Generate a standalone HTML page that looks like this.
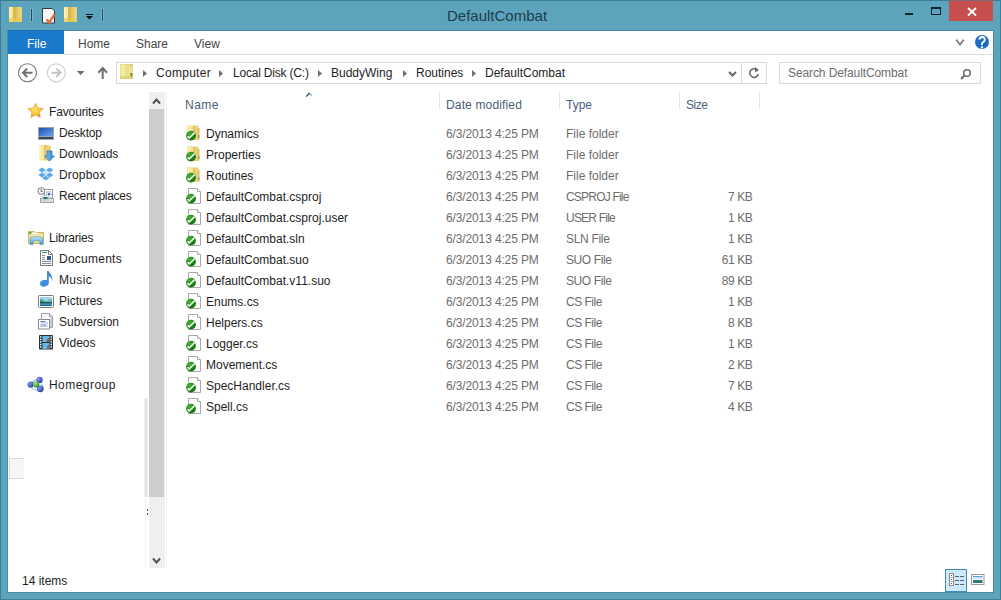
<!DOCTYPE html>
<html><head><meta charset="utf-8">
<style>
*{margin:0;padding:0;box-sizing:border-box}
html,body{width:1001px;height:600px;overflow:hidden;background:#5ba4bb;font-family:"Liberation Sans",sans-serif;font-size:12px;color:#1e1e1e}
.a{position:absolute}
.t{position:absolute;white-space:nowrap;line-height:12px}
.gy{color:#6d6d6d}
.ic{position:absolute;width:16px;height:16px}
.folder{background:linear-gradient(90deg,#f3dd8a,#e9c85a)}
.file{background:#fff;border:1px solid #aaa}

</style></head><body>
<div class="a" style="left:0;top:0;width:1001px;height:600px;border:1px solid #3d7f98"></div>
<div class="t" style="left:447px;top:8px;font-size:15px;line-height:15px;color:#1e3c50">DefaultCombat</div>
<div class="a" style="left:7px;top:30px;width:987px;height:563px;background:#fff;border:1px solid #4d8a9e"></div>
<div class="a" style="left:8px;top:30px;width:56px;height:24px;background:#1979ca;border-top:1px solid #1f6cb0"></div>
<div class="t" style="left:27px;top:38px;color:#fff">File</div>
<div class="t" style="left:78px;top:38px;color:#444">Home</div>
<div class="t" style="left:136px;top:38px;color:#444">Share</div>
<div class="t" style="left:194px;top:38px;color:#444">View</div>
<div class="a" style="left:64px;top:54px;width:929px;height:1px;background:#dadbdc"></div>
<div class="a" style="left:116px;top:62px;width:651px;height:22px;border:1px solid #d9d9d9"></div>
<div class="a" style="left:741px;top:62px;width:1px;height:22px;background:#d9d9d9"></div>
<div class="a" style="left:779px;top:62px;width:202px;height:22px;border:1px solid #d9d9d9"></div>
<div class="t" style="left:156px;top:67px;letter-spacing:0.28px">Computer</div>
<div class="t" style="left:233px;top:67px;letter-spacing:-0.2px">Local Disk (C:)</div>
<div class="t" style="left:331px;top:67px">BuddyWing</div>
<div class="t" style="left:416px;top:67px">Routines</div>
<div class="t" style="left:485px;top:67px">DefaultCombat</div>
<div class="t gy" style="left:788px;top:67px;letter-spacing:-0.1px">Search DefaultCombat</div>
<div class="t" style="left:49px;top:106px;letter-spacing:-0.13px">Favourites</div>
<div class="t" style="left:59px;top:127px;letter-spacing:-0.17px">Desktop</div>
<div class="t" style="left:59px;top:148px">Downloads</div>
<div class="t" style="left:59px;top:169px;letter-spacing:0.17px">Dropbox</div>
<div class="t" style="left:59px;top:190px;letter-spacing:-0.28px">Recent places</div>
<div class="t" style="left:49px;top:232px;letter-spacing:-0.18px">Libraries</div>
<div class="t" style="left:59px;top:253px;letter-spacing:0.25px">Documents</div>
<div class="t" style="left:59px;top:274px;letter-spacing:0.35px">Music</div>
<div class="t" style="left:59px;top:295px">Pictures</div>
<div class="t" style="left:59px;top:316px">Subversion</div>
<div class="t" style="left:59px;top:337px">Videos</div>
<div class="t" style="left:49px;top:379px;letter-spacing:0.45px">Homegroup</div>
<div class="a" style="left:144px;top:398px;width:4px;height:99px;background:#e6e6e6;border-left:1px solid #efefef;border-right:1px solid #f0f0f0"></div>
<div class="a" style="left:9px;top:458px;width:15px;height:21px;background:#f6f6f6;border:1px solid #dadada;border-right:none"></div>
<div class="a" style="left:147px;top:509px;width:1px;height:2px;background:#1f5a9a"></div><div class="a" style="left:147px;top:513px;width:1px;height:2px;background:#1f5a9a"></div><div class="a" style="left:145px;top:497px;width:1px;height:71px;background:#f2f2f2"></div>
<div class="a" style="left:149px;top:92px;width:16px;height:476px;background:#efefef"></div><div class="a" style="left:166px;top:92px;width:1px;height:476px;background:#f0f0f0"></div>
<div class="a" style="left:149px;top:109px;width:15px;height:388px;background:#cdcdcd"></div>
<div class="t" style="left:185px;top:99px;color:#4c607a;letter-spacing:0.5px">Name</div>
<div class="t" style="left:446px;top:99px;color:#4c607a;letter-spacing:0.15px">Date modified</div>
<div class="t" style="left:566px;top:99px;color:#4c607a">Type</div>
<div class="t" style="left:686px;top:99px;color:#4c607a;letter-spacing:-0.5px">Size</div>
<div class="a" style="left:439px;top:92px;width:1px;height:17px;background:#e5e5e5"></div>
<div class="a" style="left:559px;top:92px;width:1px;height:17px;background:#e5e5e5"></div>
<div class="a" style="left:679px;top:92px;width:1px;height:17px;background:#e5e5e5"></div>
<div class="a" style="left:759px;top:92px;width:1px;height:17px;background:#e5e5e5"></div>
<div class="t" style="left:22px;top:575px">14 items</div>
<div class="a" style="left:945px;top:569px;width:22px;height:23px;background:#cde9f9;border:1px solid #3b8bbb"></div>

<div class="t nm" style="left:206px;top:128px">Dynamics</div>
<div class="t gy dt" style="left:446px;top:128px;letter-spacing:-0.13px">6/3/2013 4:25 PM</div>
<div class="t gy ty" style="left:566px;top:128px;letter-spacing:0px">File folder</div>
<div class="t nm" style="left:206px;top:149px">Properties</div>
<div class="t gy dt" style="left:446px;top:149px;letter-spacing:-0.13px">6/3/2013 4:25 PM</div>
<div class="t gy ty" style="left:566px;top:149px;letter-spacing:0px">File folder</div>
<div class="t nm" style="left:206px;top:170px">Routines</div>
<div class="t gy dt" style="left:446px;top:170px;letter-spacing:-0.13px">6/3/2013 4:25 PM</div>
<div class="t gy ty" style="left:566px;top:170px;letter-spacing:0px">File folder</div>
<div class="t nm" style="left:206px;top:191px">DefaultCombat.csproj</div>
<div class="t gy dt" style="left:446px;top:191px;letter-spacing:-0.13px">6/3/2013 4:25 PM</div>
<div class="t gy ty" style="left:566px;top:191px;letter-spacing:-0.8px">CSPROJ File</div>
<div class="t gy sz" style="right:248.6px;top:191px;letter-spacing:-0.4px">7 KB</div>
<div class="t nm" style="left:206px;top:212px">DefaultCombat.csproj.user</div>
<div class="t gy dt" style="left:446px;top:212px;letter-spacing:-0.13px">6/3/2013 4:25 PM</div>
<div class="t gy ty" style="left:566px;top:212px;letter-spacing:-0.79px">USER File</div>
<div class="t gy sz" style="right:248.6px;top:212px;letter-spacing:-0.4px">1 KB</div>
<div class="t nm" style="left:206px;top:233px">DefaultCombat.sln</div>
<div class="t gy dt" style="left:446px;top:233px;letter-spacing:-0.13px">6/3/2013 4:25 PM</div>
<div class="t gy ty" style="left:566px;top:233px;letter-spacing:-0.3px">SLN File</div>
<div class="t gy sz" style="right:248.6px;top:233px;letter-spacing:-0.4px">1 KB</div>
<div class="t nm" style="left:206px;top:254px">DefaultCombat.suo</div>
<div class="t gy dt" style="left:446px;top:254px;letter-spacing:-0.13px">6/3/2013 4:25 PM</div>
<div class="t gy ty" style="left:566px;top:254px;letter-spacing:-0.4px">SUO File</div>
<div class="t gy sz" style="right:248.6px;top:254px;letter-spacing:-0.4px">61 KB</div>
<div class="t nm" style="left:206px;top:275px">DefaultCombat.v11.suo</div>
<div class="t gy dt" style="left:446px;top:275px;letter-spacing:-0.13px">6/3/2013 4:25 PM</div>
<div class="t gy ty" style="left:566px;top:275px;letter-spacing:-0.4px">SUO File</div>
<div class="t gy sz" style="right:248.6px;top:275px;letter-spacing:-0.4px">89 KB</div>
<div class="t nm" style="left:206px;top:296px">Enums.cs</div>
<div class="t gy dt" style="left:446px;top:296px;letter-spacing:-0.13px">6/3/2013 4:25 PM</div>
<div class="t gy ty" style="left:566px;top:296px;letter-spacing:-0.5px">CS File</div>
<div class="t gy sz" style="right:248.6px;top:296px;letter-spacing:-0.4px">1 KB</div>
<div class="t nm" style="left:206px;top:317px">Helpers.cs</div>
<div class="t gy dt" style="left:446px;top:317px;letter-spacing:-0.13px">6/3/2013 4:25 PM</div>
<div class="t gy ty" style="left:566px;top:317px;letter-spacing:-0.5px">CS File</div>
<div class="t gy sz" style="right:248.6px;top:317px;letter-spacing:-0.4px">8 KB</div>
<div class="t nm" style="left:206px;top:338px">Logger.cs</div>
<div class="t gy dt" style="left:446px;top:338px;letter-spacing:-0.13px">6/3/2013 4:25 PM</div>
<div class="t gy ty" style="left:566px;top:338px;letter-spacing:-0.5px">CS File</div>
<div class="t gy sz" style="right:248.6px;top:338px;letter-spacing:-0.4px">1 KB</div>
<div class="t nm" style="left:206px;top:359px">Movement.cs</div>
<div class="t gy dt" style="left:446px;top:359px;letter-spacing:-0.13px">6/3/2013 4:25 PM</div>
<div class="t gy ty" style="left:566px;top:359px;letter-spacing:-0.5px">CS File</div>
<div class="t gy sz" style="right:248.6px;top:359px;letter-spacing:-0.4px">2 KB</div>
<div class="t nm" style="left:206px;top:380px">SpecHandler.cs</div>
<div class="t gy dt" style="left:446px;top:380px;letter-spacing:-0.13px">6/3/2013 4:25 PM</div>
<div class="t gy ty" style="left:566px;top:380px;letter-spacing:-0.5px">CS File</div>
<div class="t gy sz" style="right:248.6px;top:380px;letter-spacing:-0.4px">7 KB</div>
<div class="t nm" style="left:206px;top:401px">Spell.cs</div>
<div class="t gy dt" style="left:446px;top:401px;letter-spacing:-0.13px">6/3/2013 4:25 PM</div>
<div class="t gy ty" style="left:566px;top:401px;letter-spacing:-0.5px">CS File</div>
<div class="t gy sz" style="right:248.6px;top:401px;letter-spacing:-0.4px">4 KB</div>
<svg class="a" style="left:0;top:0" width="1001" height="600" viewBox="0 0 1001 600">
<defs>
 <linearGradient id="fy" x1="0" x2="1"><stop offset="0" stop-color="#fdf3c0"/><stop offset="1" stop-color="#f3de8a"/></linearGradient>
 <linearGradient id="fy2" x1="0" x2="1"><stop offset="0" stop-color="#e2c060"/><stop offset="1" stop-color="#f0d888"/></linearGradient>
 <radialGradient id="gc" cx="0.35" cy="0.3" r="0.75"><stop offset="0" stop-color="#4db03a"/><stop offset="0.6" stop-color="#208a18"/><stop offset="1" stop-color="#156a10"/></radialGradient>
 <g id="fold">
  <rect x="2" y="0.5" width="11.5" height="14.5" fill="#e9d27a"/>
  <rect x="2.5" y="1" width="5.5" height="13.5" fill="url(#fy)"/>
  <rect x="8" y="1" width="4.5" height="13.5" fill="url(#fy2)"/>
  <rect x="12.5" y="3" width="2" height="11.5" fill="#e0c058"/>
  <rect x="13" y="10" width="1.5" height="3" fill="#8fa6a0"/>
 </g>
 <g id="chk">
  <circle cx="6" cy="10.6" r="4.9" fill="url(#gc)"/>
  <path d="M2.6 11.3 L4.2 13 L9.6 7.6" fill="none" stroke="#f4fff0" stroke-width="1.5"/>
 </g>
 <g id="page">
  <path d="M3.5 0.5 H12.5 L15.5 3.5 V15.5 H3.5 Z" fill="#fff" stroke="#a8a8a8"/>
  <path d="M12.5 0.5 V3.5 H15.5" fill="#fff" stroke="#a8a8a8"/>
 </g>
 <g id="tfold">
  <rect x="0" y="0" width="7" height="16" fill="url(#fy)"/>
  <rect x="6" y="0" width="5" height="16" fill="url(#fy2)"/>
  <rect x="11" y="1" width="2.5" height="14" fill="#e3c35a"/>
 </g>
</defs>
<!-- title bar icons -->
<g id="tf1">
<rect x="9" y="7" width="13" height="15" fill="#e8cc60"/>
<rect x="9" y="7" width="4.5" height="15" fill="url(#fy)"/>
<rect x="13" y="7" width="3" height="15" fill="#d8b848"/>
<rect x="16" y="7" width="5.5" height="15" fill="url(#fy2)"/>
<rect x="9" y="18" width="12.5" height="4" fill="#e6c850" opacity="0.6"/>
</g>
<rect x="30" y="8.5" width="3" height="13" fill="#8cc4d6" opacity="0.5"/><rect x="31" y="9" width="1" height="12" fill="#1f4a60"/>
<path d="M42.5 8.5 H52 L54.5 11 V23 H42.5 Z" fill="#fdf8f8" stroke="#303840"/>
<path d="M46.5 19.5 L49.3 22.3 L54.5 14.5" fill="none" stroke="#e66e3c" stroke-width="2.4"/>
<use href="#tf1" x="55" y="0"/>
<rect x="86" y="14" width="7" height="1" fill="#111"/>
<path d="M86 16 H93 L89.5 19.5 Z" fill="#111"/>
<rect x="101" y="8.5" width="3" height="13" fill="#8cc4d6" opacity="0.5"/><rect x="102" y="9" width="1" height="12" fill="#1f4a60"/>
<!-- window buttons -->
<rect x="905" y="13" width="8" height="2" fill="#10202a"/>
<rect x="931.5" y="7.5" width="9" height="7" fill="none" stroke="#10202a"/>
<rect x="931" y="7" width="10" height="2" fill="#10202a"/>
<rect x="949" y="0.5" width="44" height="20.5" fill="#c74f4e"/>
<path d="M968 8 L976 15.5 M976 8 L968 15.5" stroke="#fff" stroke-width="1.8"/>
<!-- ribbon right -->
<path d="M956.2 39.6 L960 44.6 L963.8 39.6" fill="none" stroke="#8c8c8c" stroke-width="2"/>
<circle cx="982" cy="42" r="7" fill="#1a6fc4"/>
<path d="M979.3 39.6 Q979.8 37 982.3 37 Q985 37.2 984.8 39.8 Q984.6 41.3 982.8 42.4 Q982 43 982 44 V45" fill="none" stroke="#fff" stroke-width="1.9"/><rect x="981" y="46.3" width="2" height="2" fill="#fff"/>
<!-- nav buttons -->
<circle cx="27.5" cy="72.8" r="9" fill="none" stroke="#787878" stroke-width="1.1"/>
<path d="M23.5 72.8 H32.5 M27.2 68.6 L23 72.8 L27.2 77" fill="none" stroke="#6e6e6e" stroke-width="2"/>
<circle cx="56.3" cy="72.8" r="9" fill="none" stroke="#d0d0d0" stroke-width="1.2"/>
<path d="M51.5 72.8 H60.5 M56.3 68.6 L60.5 72.8 L56.3 77" fill="none" stroke="#c4c4c4" stroke-width="2"/>
<path d="M76.8 71 H84.6 L80.7 75 Z" fill="#6e6e6e"/>
<path d="M102.7 68.5 V79 M98.3 72.8 L102.7 68 L107.1 72.8" fill="none" stroke="#707070" stroke-width="2"/>
<g>
<rect x="120" y="64" width="13" height="15" fill="#dcd070"/>
<rect x="120.5" y="64.5" width="5" height="14" fill="#f2eca8"/>
<rect x="125.5" y="64.5" width="4.5" height="14" fill="#ecdf88"/>
<rect x="130" y="66" width="2.6" height="12" fill="#e8e4a0"/>
<rect x="130.5" y="73" width="1.8" height="4" fill="#7a8040"/>
<rect x="120" y="76" width="13" height="3" fill="#d8c860" opacity="0.5"/>
</g>
<path d="M143 70 L147 73.5 L143 77 Z" fill="#707070"/>
<path d="M219 70 L223 73.5 L219 77 Z" fill="#707070"/>
<path d="M318 70 L322 73.5 L318 77 Z" fill="#707070"/>
<path d="M403 70 L407 73.5 L403 77 Z" fill="#707070"/>
<path d="M472 70 L476 73.5 L472 77 Z" fill="#707070"/>
<path d="M729 72 L732.5 75.5 L736 72" fill="none" stroke="#6a6a6a" stroke-width="2"/>
<path d="M757.3 70.2 A4.3 4.3 0 1 0 758.3 74" fill="none" stroke="#6a6a6a" stroke-width="1.6"/>
<path d="M755 67 L759 70 L755 72.5 Z" fill="#6a6a6a"/>
<circle cx="967" cy="73" r="3.3" fill="none" stroke="#6a6a6a" stroke-width="1.5"/>
<path d="M964.7 75.3 L961 79" stroke="#6a6a6a" stroke-width="2"/>
<!-- scroll arrows -->
<path d="M153 103.5 L156.5 99.5 L160 103.5" fill="none" stroke="#505050" stroke-width="2"/>
<path d="M153 558.5 L156.5 562.5 L160 558.5" fill="none" stroke="#505050" stroke-width="2"/>
<!-- sort arrow -->
<path d="M309.5 93 L312 95.8" fill="none" stroke="#8ab8c8" stroke-width="1.2"/><path d="M306.2 96.6 L309.6 93" fill="none" stroke="#2a4858" stroke-width="1.3"/>

<!-- star -->
<defs>
<radialGradient id="star" cx="0.45" cy="0.45" r="0.6"><stop offset="0" stop-color="#fde66a"/><stop offset="0.6" stop-color="#f5c030"/><stop offset="1" stop-color="#e07a28"/></radialGradient>
<linearGradient id="scr" x1="0" y1="0" x2="1" y2="1"><stop offset="0" stop-color="#1f4fb0"/><stop offset="1" stop-color="#6aa4f0"/></linearGradient>
<linearGradient id="arr" x1="0" x2="1"><stop offset="0" stop-color="#7cc4f4"/><stop offset="1" stop-color="#2a80d0"/></linearGradient>
<linearGradient id="lib" x1="0" y1="0" x2="0" y2="1"><stop offset="0" stop-color="#bfe8fb"/><stop offset="1" stop-color="#3a9ad8"/></linearGradient>
<linearGradient id="pic" x1="0" y1="0" x2="0" y2="1"><stop offset="0" stop-color="#9fd6f0"/><stop offset="0.45" stop-color="#a8dde8"/><stop offset="0.6" stop-color="#2d6e5a"/><stop offset="0.75" stop-color="#5aa8c8"/><stop offset="1" stop-color="#2a6aa8"/></linearGradient>
<radialGradient id="bb" cx="0.35" cy="0.35" r="0.7"><stop offset="0" stop-color="#8aa0f0"/><stop offset="1" stop-color="#2a3a9a"/></radialGradient>
<radialGradient id="gb" cx="0.35" cy="0.35" r="0.7"><stop offset="0" stop-color="#9ef07a"/><stop offset="1" stop-color="#1a8a2a"/></radialGradient>
</defs>
<path d="M35.6 103.2 L37.9 107.9 L43.3 108.6 L39.4 112.2 L40.4 117.4 L35.6 114.9 L30.8 117.4 L31.8 112.2 L27.9 108.6 L33.3 107.9 Z" fill="url(#star)" stroke="#e39a40" stroke-width="0.6"/>
<!-- desktop -->
<rect x="38" y="127" width="16" height="13" fill="#9aa4ae"/>
<rect x="39" y="128" width="14" height="8" fill="url(#scr)"/>
<rect x="39" y="137" width="14" height="2" fill="#38465a"/>
<!-- downloads -->
<rect x="39" y="145" width="6" height="15.5" fill="url(#fy)"/>
<rect x="44" y="145" width="5" height="15.5" fill="url(#fy2)"/>
<rect x="49" y="146" width="1.6" height="14" fill="#e3c35a"/>
<path d="M47 151 H52 V156 H54.3 L49.5 161.2 L44.7 156 H47 Z" fill="url(#arr)" stroke="#2a70b8" stroke-width="0.7"/>
<!-- dropbox -->
<g fill="#5aa8e8">
<path d="M42 167.5 L38.3 170 L42 172.5 L45.8 170 Z"/>
<path d="M49.7 167.5 L45.8 170 L49.7 172.5 L53.4 170 Z"/>
<path d="M38.3 175 L42 172.5 L45.8 175 L42 177.5 Z" />
<path d="M53.4 175 L49.7 172.5 L45.8 175 L49.7 177.5 Z"/>
<path d="M42 178 L45.8 175.8 L49.7 178 L45.8 180.5 Z"/>
</g>
<path d="M42 172.5 L45.8 170 L49.7 172.5 L45.8 175 Z" fill="#c8e4fa"/>
<!-- recent places -->
<rect x="44.5" y="189.5" width="8" height="8.5" fill="#fff" stroke="#9a9a9a"/>
<rect x="46" y="191.5" width="5" height="1" fill="#9ab0d0"/><rect x="46" y="193.5" width="1.5" height="1.5" fill="#8aa8d8"/><rect x="48" y="193.2" width="2" height="2" fill="#2a5aa0"/><rect x="50.5" y="193.5" width="1" height="1.5" fill="#5a8ad0"/>
<circle cx="41.3" cy="191" r="3.2" fill="#fafafa" stroke="#8a8a8a" stroke-width="1.1"/>
<path d="M41.2 189.2 V191.5 H42.5" fill="none" stroke="#333" stroke-width="0.8"/>
<path d="M40.5 198.5 H53.5 V202.5 H40.5 Z" fill="#e0e0e0" stroke="#a0a0a0"/>
<rect x="42.3" y="195.8" width="6.4" height="4.4" fill="#d8eef6" stroke="#9ccbe0" stroke-width="0.6"/>
<rect x="43.3" y="197" width="4.4" height="2.2" fill="#3e7468"/>
<!-- libraries -->
<path d="M28.5 231.5 H34 L35 232.5 H43.5 V243.5 H28.5 Z" fill="#f2dc90" stroke="#d4b060" stroke-width="1"/>
<rect x="29" y="232" width="2.5" height="1.8" fill="#5aaa3a"/>
<rect x="32" y="232.6" width="6" height="1.2" fill="#fff"/>
<rect x="29" y="234.5" width="14" height="1" fill="#e8f0c8"/>
<path d="M30 244.5 V240 Q30 236.8 33.5 236.8 H39.5 Q43 236.8 43 240 V244.5 H39.8 V240.8 H33.2 V244.5 Z" fill="url(#lib)" stroke="#3a90c8" stroke-width="0.5"/>
<!-- documents -->
<path d="M40.5 250.5 H48.5 L52.5 254.5 V265.5 H40.5 Z" fill="#fff" stroke="#7a7a7a" stroke-width="1"/>
<path d="M48.5 250.5 V254.5 H52.5" fill="none" stroke="#7a7a7a"/>
<rect x="42" y="252" width="5" height="1" fill="#3a8a6a"/>
<rect x="42" y="255" width="3" height="1" fill="#8a8a9a"/><rect x="42" y="257" width="3" height="1" fill="#8a8a9a"/><rect x="42" y="259" width="3" height="1" fill="#8a8a9a"/>
<rect x="42" y="261" width="9" height="1" fill="#8a8a9a"/><rect x="42" y="263" width="9" height="1" fill="#8a8a9a"/>
<rect x="47" y="256" width="4" height="4" fill="#2a5a8a"/>
<!-- music -->
<ellipse cx="44.3" cy="283.3" rx="4.3" ry="3.3" fill="#3a90d8" transform="rotate(-15 44.3 283.3)"/>
<rect x="47" y="271" width="1.8" height="12.5" fill="#3a90d8"/>
<path d="M48 271 Q52.5 274 52.5 282 Q51.5 277 48 276 Z" fill="#4a88c8"/>
<!-- pictures -->
<rect x="38.5" y="295.5" width="15" height="12" rx="1" fill="#fff" stroke="#7a7a7a"/>
<rect x="40" y="297" width="12" height="9" fill="#9fd4ee"/>
<path d="M40 298.5 Q42.5 298.5 44.5 300.5 L46 301 Q48.5 299 52 298.5 V306 H40 Z" fill="#6ab4b8"/>
<path d="M40 300 Q42.5 300.5 45 302.3 H52 V306 H40 Z" fill="#3a8a70"/>
<rect x="40" y="302.2" width="12" height="1.3" fill="#1c4e44"/>
<rect x="40" y="303.5" width="12" height="2.5" fill="#3c94c0"/>
<rect x="40" y="305" width="12" height="1" fill="#20609a"/>
<!-- subversion -->
<path d="M41.5 313.5 H49.5 L52.5 316.5 V327.5 H41.5 Z" fill="#f4f6f8" stroke="#9aa0a8"/>
<path d="M49.5 313.5 V316.5 H52.5" fill="#dde4ea" stroke="#9aa0a8"/>
<rect x="50" y="318" width="2" height="9" fill="#c8d0d8"/>
<rect x="38.5" y="319.5" width="11" height="9.5" fill="#fff" stroke="#8a8e98"/>
<path d="M40.5 321.5 H45.5 M40.5 325 H46.5" stroke="#6a78c0" stroke-width="1.2"/>
<path d="M40.5 322.8 H47.5 V324 M40.5 326.2 H47.5 L48.3 327" fill="none" stroke="#98a8d8" stroke-width="0.8"/>
<!-- videos -->
<rect x="39" y="335" width="14" height="14.5" rx="1" fill="#1e3434"/>
<rect x="42.5" y="336" width="7" height="6" fill="#62b8ec"/>
<rect x="42.5" y="343" width="7" height="6" fill="#62b8ec"/>
<path d="M47.5 338.5 L49.5 337.5 V342 H46 Z" fill="#9a5a48"/>
<path d="M47.5 345.5 L49.5 344.5 V349 H46.5 Z" fill="#8a6a60"/>
<g fill="#f4f4f4">
<rect x="40" y="336.2" width="1.5" height="1.5"/><rect x="40" y="338.7" width="1.5" height="1.5"/><rect x="40" y="341.2" width="1.5" height="1.5"/><rect x="40" y="343.7" width="1.5" height="1.5"/><rect x="40" y="346.2" width="1.5" height="1.5"/>
<rect x="50.5" y="336.2" width="1.5" height="1.5"/><rect x="50.5" y="338.7" width="1.5" height="1.5"/><rect x="50.5" y="341.2" width="1.5" height="1.5"/><rect x="50.5" y="343.7" width="1.5" height="1.5"/><rect x="50.5" y="346.2" width="1.5" height="1.5"/>
</g>
<!-- homegroup -->
<path d="M31 384.5 Q33 380 38 379.5 M41.5 382 Q43 386 41 388.5 M37.5 390 Q32.5 390 31 386.5" fill="none" stroke="#b8c8f0" stroke-width="1.3"/>
<circle cx="39.6" cy="379.9" r="3.1" fill="url(#bb)"/>
<circle cx="30.6" cy="384.5" r="3.1" fill="url(#bb)"/>
<circle cx="40.3" cy="388.8" r="3.4" fill="url(#bb)"/>
<circle cx="36.3" cy="384.4" r="3.1" fill="url(#gb)"/>
<!-- view buttons -->
<rect x="949.5" y="573.5" width="4" height="12" fill="#fff" stroke="#8a8a8a"/>
<path d="M949.5 577.5 H953.5 M949.5 581.5 H953.5" stroke="#b0b0b0"/>
<rect x="951" y="575" width="1" height="1" fill="#555"/><rect x="951" y="579" width="1" height="1" fill="#b03040"/><rect x="951" y="583" width="1" height="1" fill="#555"/>
<g fill="#556070">
<rect x="955" y="576" width="4" height="1"/><rect x="960" y="576" width="4" height="1"/>
<rect x="955" y="580" width="4" height="1"/><rect x="960" y="580" width="4" height="1"/>
<rect x="955" y="584" width="4" height="1"/><rect x="960" y="584" width="4" height="1"/>
</g>
<rect x="971.5" y="574.5" width="12.5" height="10" fill="#fff" stroke="#9a9a9a"/>
<defs><linearGradient id="land" x1="0" y1="0" x2="0" y2="1"><stop offset="0" stop-color="#3a78c8"/><stop offset="0.2" stop-color="#b8e0f8"/><stop offset="0.5" stop-color="#e8f6fc"/><stop offset="0.65" stop-color="#3a7a60"/><stop offset="1" stop-color="#2a6aa0"/></linearGradient></defs>
<rect x="973" y="576" width="9.5" height="7" fill="url(#land)"/>

<use href="#fold" x="185" y="125"/><use href="#chk" x="185" y="125"/>
<use href="#fold" x="185" y="146"/><use href="#chk" x="185" y="146"/>
<use href="#fold" x="185" y="167"/><use href="#chk" x="185" y="167"/>
<use href="#page" x="185" y="188"/><use href="#chk" x="185" y="188"/>
<use href="#page" x="185" y="209"/><use href="#chk" x="185" y="209"/>
<use href="#page" x="185" y="230"/><use href="#chk" x="185" y="230"/>
<use href="#page" x="185" y="251"/><use href="#chk" x="185" y="251"/>
<use href="#page" x="185" y="272"/><use href="#chk" x="185" y="272"/>
<use href="#page" x="185" y="293"/><use href="#chk" x="185" y="293"/>
<use href="#page" x="185" y="314"/><use href="#chk" x="185" y="314"/>
<use href="#page" x="185" y="335"/><use href="#chk" x="185" y="335"/>
<use href="#page" x="185" y="356"/><use href="#chk" x="185" y="356"/>
<use href="#page" x="185" y="377"/><use href="#chk" x="185" y="377"/>
<use href="#page" x="185" y="398"/><use href="#chk" x="185" y="398"/>
</svg>
</body></html>
